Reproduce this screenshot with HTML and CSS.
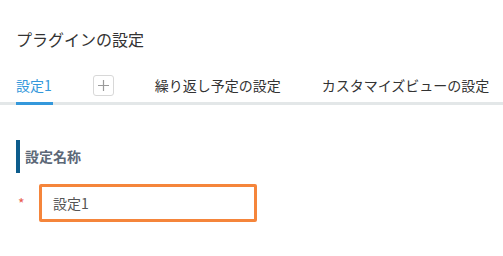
FILE: index.html
```html
<!DOCTYPE html>
<html lang="ja">
<head>
<meta charset="utf-8">
<link rel="stylesheet" href="styles.css">
</head>
<body>
<div class="page">
  <h1 class="title">プラグインの設定</h1>
  <div class="tabs">
    <div class="tab active">設定1</div>
    <button class="add" type="button" aria-label="追加">
      <svg width="11" height="11" viewBox="0 0 11 11"><path d="M5.5 0v11M0 5.5h11" stroke="#9a9a9a" stroke-width="1.2" fill="none"/></svg>
    </button>
    <div class="tab">繰り返し予定の設定</div>
    <div class="tab">カスタマイズビューの設定</div>
  </div>
  <div class="section">
    <div class="section-title">設定名称</div>
    <div class="field">
      <span class="req">*</span>
      <input class="input" type="text" value="設定1">
    </div>
  </div>
</div>
</body>
</html>
```

FILE: styles.css
```css
html, body {
  margin: 0;
  padding: 0;
  background: #fff;
}
body {
  font-family: "Noto Sans CJK JP", "Noto Sans", sans-serif;
  color: #333;
}
.page {
  padding: 27px 0 0 16px;
}
.title {
  margin: 0;
  font-size: 16px;
  font-weight: normal;
  line-height: 24px;
  color: #333;
}
.tabs {
  margin-top: 24px;
  margin-left: -16px;
  padding-left: 16px;
  display: flex;
  align-items: flex-end;
  border-bottom: 3px solid #e3e7e8;
}
.tab {
  flex-shrink: 0;
  font-size: 14px;
  line-height: 20px;
  color: #333;
  margin-right: 41px;
  margin-bottom: -3px;
  padding-bottom: 7px;
  border-bottom: 3px solid transparent;
  white-space: nowrap;
}
.tab:last-child {
  margin-right: 0;
}
.tab.active {
  color: #3498db;
  border-bottom-color: #3498db;
  padding-right: 1px;
  margin-right: 40px;
}
.add {
  flex-shrink: 0;
  align-self: flex-start;
  width: 21px;
  height: 21px;
  padding: 0;
  margin: 0 41px 0 0;
  border: 1px solid #d8d8d8;
  border-radius: 3px;
  background: #fff;
  display: flex;
  align-items: center;
  justify-content: center;
  box-sizing: border-box;
}
.section {
  margin-top: 35px;
}
.section-title {
  border-left: 4px solid #0d5c8c;
  padding-left: 5px;
  font-size: 14px;
  font-weight: bold;
  color: #5c6877;
  line-height: 33px;
  height: 33px;
}
.field {
  margin-top: 11px;
  display: flex;
  align-items: center;
}
.req {
  color: #e95c4f;
  font-size: 14px;
  line-height: 14px;
  width: 23px;
  padding-left: 2px;
  box-sizing: border-box;
}
.input {
  width: 218px;
  height: 38px;
  box-sizing: border-box;
  border: 3px solid #f5853b;
  border-radius: 2px;
  padding: 0 11px;
  font-family: "Noto Sans CJK JP", "Noto Sans", sans-serif;
  font-size: 14px;
  color: #555;
  outline: none;
  background: #fff;
}
```
